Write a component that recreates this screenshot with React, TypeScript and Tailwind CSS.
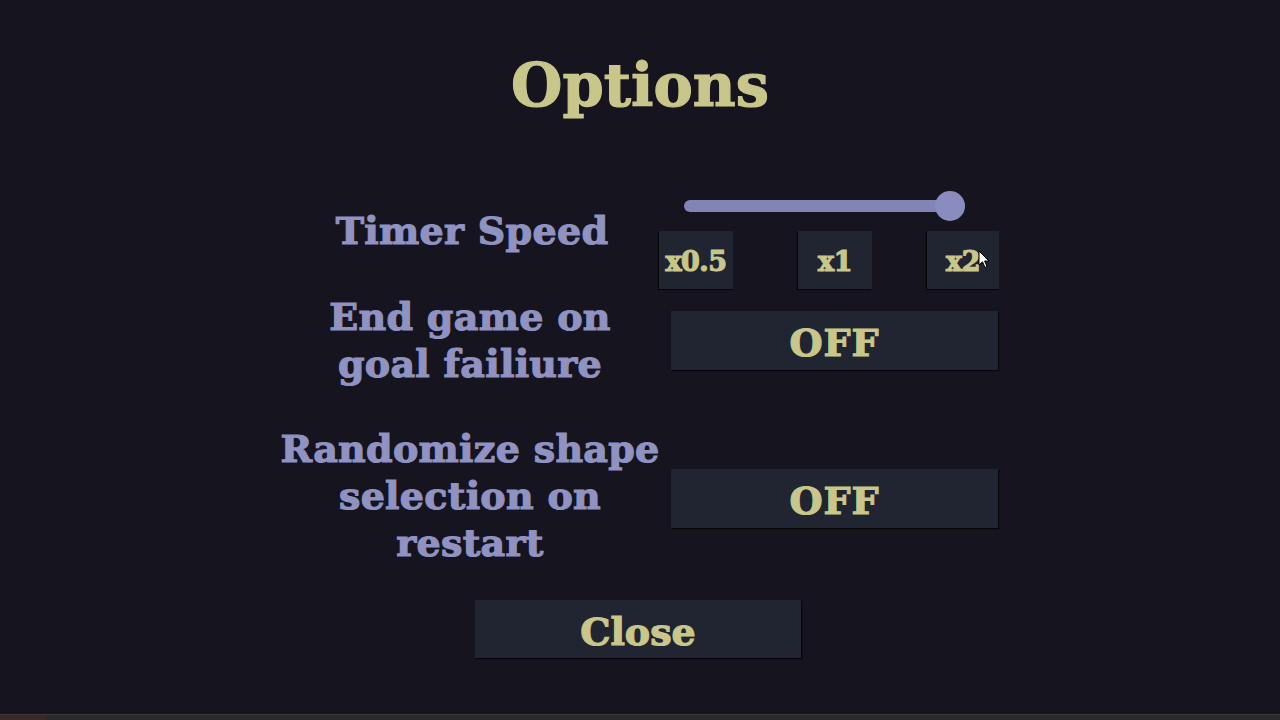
import React from 'react';

const font = "font-['DejaVu_Serif',serif] font-bold [-webkit-text-stroke:1.2px_currentColor]";

const SpeedButton: React.FC<{ label: string; width?: string; cursor?: boolean; className?: string }> = ({
  label,
  width = 'w-[74px]',
  cursor,
  className = '',
}) => (
  <div
    className={`relative ${width} h-[58px] flex items-center justify-center pt-1 bg-[#212431] shadow-[-1px_1px_1px_rgba(0,0,0,0.7)] text-[27px] text-[#c8c68a] tracking-[-0.5px] ${className}`}
  >
    {label}
    {cursor && (
      <svg className="absolute left-[51px] top-[19px]" width="12" height="19" viewBox="0 0 12 19">
        <path d="M1 1 L1 15 L4.5 11.8 L7 17.5 L9 16.6 L6.6 11 L11 11 Z" fill="#fff" stroke="#000" strokeWidth="1" />
      </svg>
    )}
  </div>
);

const ToggleButton: React.FC<{ value: string; className?: string }> = ({ value, className = '' }) => (
  <div
    className={`w-[327px] h-[59px] flex items-center justify-center pt-1 bg-[#212431] shadow-[1px_1px_1px_rgba(0,0,0,0.7)] text-[38px] text-[#c8c68a] tracking-[1px] ${className}`}
  >
    {value}
  </div>
);

const Label: React.FC<{ lines: string[]; className?: string }> = ({ lines, className = '' }) => (
  <div className={`w-[378px] flex flex-col items-center text-[38px] leading-[47px] text-[#9092c2] whitespace-nowrap tracking-[0.3px] ${className}`}>
    {lines.map((l) => (
      <span key={l}>{l}</span>
    ))}
  </div>
);

const App: React.FC = () => {
  return (
    <div className={`w-full h-[720px] flex flex-col bg-[#16151f] overflow-hidden ${font}`}>
      <div className="flex-1 flex flex-col items-center">
        {/* Title */}
        <h1 className="mt-[50px] h-[72px] text-[59px] leading-[72px] text-[#c8c68a]">Options</h1>

        <div className="w-[718px] mt-[69px] flex flex-col">
          {/* Timer speed */}
          <div className="flex items-start">
            <Label lines={['Timer Speed']} className="mt-[16px] pl-[4px]" />
            <div className="w-[340px] flex flex-col">
              <div className="relative h-[30px] flex items-center">
                <div className="ml-[25px] w-[281px] h-[12px] rounded-full bg-[#8384b6]" />
                <div className="absolute left-[276px] top-0 w-[30px] h-[30px] rounded-full bg-[#8a8cbf]" />
              </div>
              <div className="mt-[10px] flex">
                <SpeedButton label="x0.5" />
                <SpeedButton label="x1" className="ml-[65px]" />
                <SpeedButton label="x2" width="w-[72px]" className="ml-[55px]" cursor />
              </div>
            </div>
          </div>

          {/* End game */}
          <div className="mt-[4px] flex items-start">
            <Label lines={['End game on', 'goal failiure']} />
            <div className="w-[340px] pl-[12px] mt-[18px]">
              <ToggleButton value="OFF" />
            </div>
          </div>

          {/* Randomize */}
          <div className="mt-[38px] flex items-start">
            <Label lines={['Randomize shape', 'selection on', 'restart']} />
            <div className="w-[340px] pl-[12px] mt-[44px]">
              <ToggleButton value="OFF" />
            </div>
          </div>
        </div>

        {/* Close */}
        <button
          className={`mt-[34px] w-[326px] h-[58px] flex items-center justify-center pt-1 bg-[#212431] shadow-[1px_1px_1px_rgba(0,0,0,0.7)] text-[38px] text-[#c8c68a] -translate-x-[2px] ${font}`}
        >
          Close
        </button>
      </div>

      {/* bottom strip */}
      <div className="h-[6px] flex border-t border-[#3a3a3d] bg-[#2b2b2e]">
        <div className="w-[45px] bg-[#3a2924]" />
      </div>
    </div>
  );
};

export default App;
